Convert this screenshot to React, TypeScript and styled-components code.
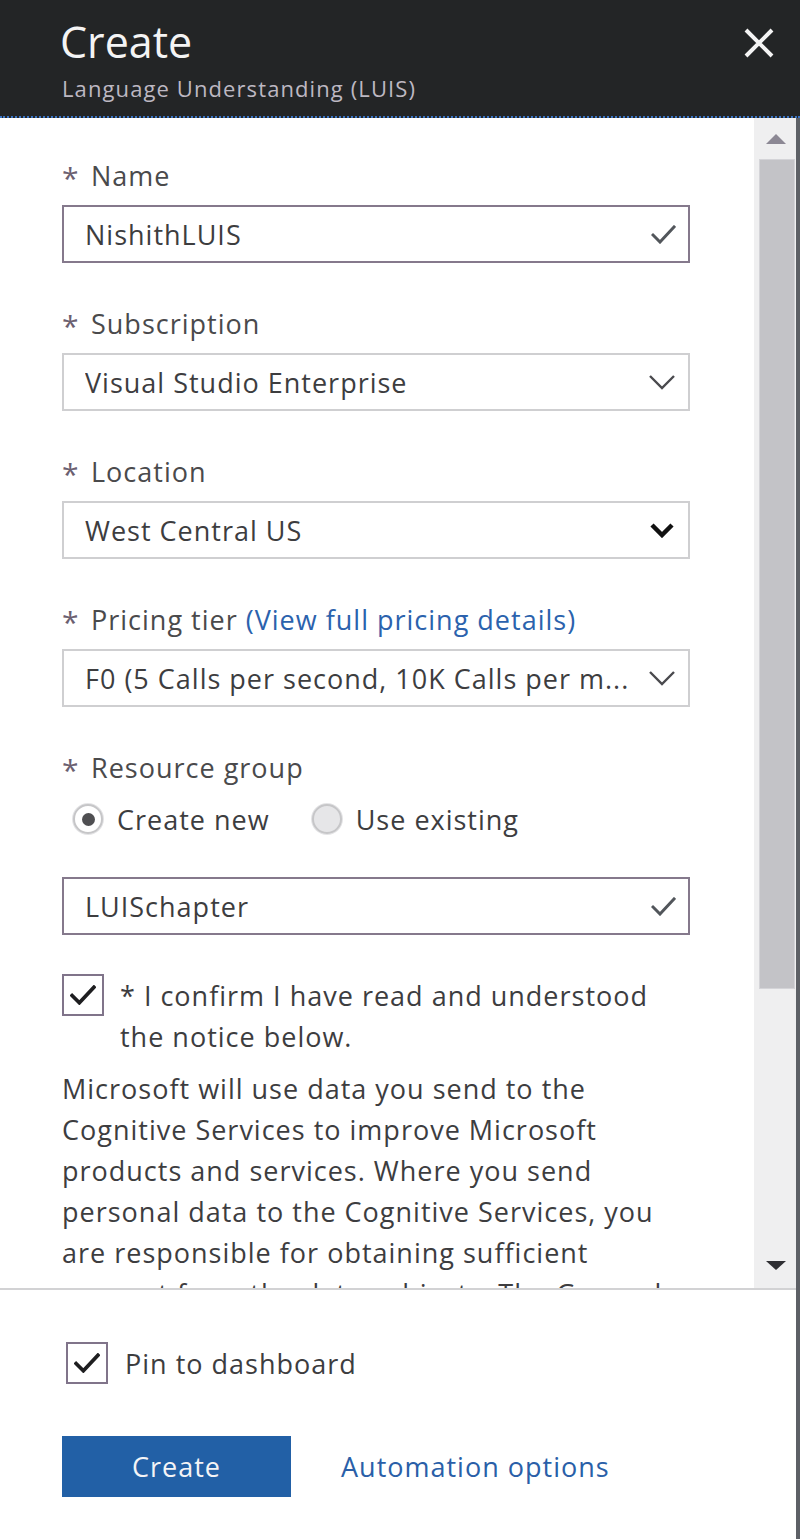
import React from "react";
import styled, { createGlobalStyle } from "styled-components";

const GlobalStyle = createGlobalStyle`
  html, body { margin: 0; padding: 0; background: #ffffff; }
  body { font-family: "Open Sans", "Noto Sans", "Liberation Sans", sans-serif; }
  * { box-sizing: border-box; }
`;

const Panel = styled.div`
  width: 800px;
  height: 1539px;
  display: flex;
  flex-direction: column;
  background: #ffffff;
  overflow: hidden;
`;

const Header = styled.header`
  height: 118px;
  flex: none;
  background: #232526;
  border-bottom: 2px dotted #3a74c4;
  display: flex;
  align-items: flex-start;
  justify-content: space-between;
  padding: 12px 24px 0 60px;
`;

const Titles = styled.div`
  display: flex;
  flex-direction: column;
`;

const Title = styled.h1`
  margin: 0;
  font-size: 43px;
  font-weight: 400;
  color: #f4f4f4;
  line-height: 60px;
`;

const Subtitle = styled.div`
  font-size: 22px;
  color: #bdb8c2;
  line-height: 28px;
  margin-top: 2px;
  padding-left: 2px;
  letter-spacing: 1.1px;
`;

const CloseButton = styled.button`
  background: none;
  border: none;
  padding: 0;
  margin-top: 14px;
  width: 34px;
  height: 34px;
  display: flex;
  align-items: center;
  justify-content: center;
  cursor: pointer;
`;

const Body = styled.div`
  flex: 1;
  display: flex;
  flex-direction: column;
  border-right: 4px solid #5d6066;
  min-height: 0;
  font-size: 27px;
  letter-spacing: 1px;
  color: #3d3d3f;
`;

const Main = styled.div`
  height: 1172px;
  flex: none;
  display: flex;
  flex-direction: row;
  border-bottom: 2px solid #d2d2d4;
`;

const Content = styled.div`
  flex: 1;
  overflow: hidden;
  padding: 40px 64px 0 62px;
  display: flex;
  flex-direction: column;
  & > * { flex-shrink: 0; }
`;

const Field = styled.div<{ $gap?: number }>`
  display: flex;
  flex-direction: column;
  gap: 11px;
  margin-bottom: ${(p) => p.$gap ?? 43}px;
`;

const Label = styled.div`
  height: 36px;
  line-height: 36px;
  color: #4a4a4c;
  display: flex;
  align-items: center;
  white-space: nowrap;
`;

const Star = styled.span`
  color: #6b6070;
  font-size: 30px;
  width: 29px;
  flex: none;
  margin-top: 4px;
`;

const Link = styled.span`
  color: #2b62ad;
`;

const Box = styled.div<{ $strong?: boolean }>`
  height: 58px;
  flex: none;
  border: ${(p) => (p.$strong ? "2px solid #85798c" : "2px solid #cfcfd1")};
  display: flex;
  align-items: center;
  justify-content: space-between;
  padding: 0 12px 0 21px;
  background: #fff;
`;

const BoxText = styled.span`
  white-space: nowrap;
  overflow: hidden;
`;

const RadioRow = styled.div`
  height: 36px;
  display: flex;
  align-items: center;
  padding-left: 11px;
  margin: 15px 0 40px;
`;

const RadioOption = styled.label`
  display: flex;
  align-items: center;
  gap: 14px;
  margin-right: 42px;
`;

const RadioCircle = styled.span<{ $checked?: boolean }>`
  width: 30px;
  height: 30px;
  border-radius: 50%;
  border: 2px solid #c6c6c8;
  background: ${(p) => (p.$checked ? "#ffffff" : "#e6e6e8")};
  box-shadow: 0 0 0 1px #e4e4e6;
  display: flex;
  align-items: center;
  justify-content: center;
  &::after {
    content: "";
    width: 13px;
    height: 13px;
    border-radius: 50%;
    background: ${(p) => (p.$checked ? "#4f4f52" : "transparent")};
  }
`;

const ConfirmRow = styled.div`
  display: flex;
  align-items: flex-start;
  gap: 16px;
  margin-top: 39px;
`;

const CheckBox = styled.span`
  width: 42px;
  height: 42px;
  flex: none;
  border: 2px solid #80748a;
  display: flex;
  align-items: center;
  justify-content: center;
  background: #fff;
`;

const ConfirmText = styled.div`
  line-height: 41px;
  margin-top: 1px;
  white-space: nowrap;
`;

const Notice = styled.p`
  margin: 11px 0 0;
  line-height: 41px;
  white-space: nowrap;
`;

const Scrollbar = styled.div`
  width: 42px;
  flex: none;
  background: #efeff0;
  display: flex;
  flex-direction: column;
  align-items: center;
  padding-top: 16px;
`;

const Arrow = styled.div<{ $down?: boolean }>`
  width: 0;
  height: 0;
  border-left: 10px solid transparent;
  border-right: 10px solid transparent;
  ${(p) =>
    p.$down
      ? "border-top: 9px solid #2f2f33;"
      : "border-bottom: 10px solid #8c8894;"}
  margin-left: 2px;
`;

const Thumb = styled.div`
  width: 36px;
  height: 830px;
  margin: 15px 0 0 4px;
  background: #c3c3c7;
  border: 1px solid #d4d4d8;
`;

const Spacer = styled.div`
  flex: 1;
`;

const DownWrap = styled.div`
  padding-bottom: 18px;
`;

const Footer = styled.footer`
  flex: 1;
  display: flex;
  flex-direction: column;
  padding: 52px 0 0 62px;
`;

const PinRow = styled.div`
  display: flex;
  align-items: center;
  gap: 17px;
  padding-left: 4px;
`;

const Actions = styled.div`
  display: flex;
  align-items: center;
  gap: 50px;
  margin-top: 52px;
`;

const PrimaryButton = styled.button`
  width: 229px;
  height: 61px;
  background: #2260a6;
  border: none;
  color: #f4f4f6;
  font-family: inherit;
  font-size: 27px;
  letter-spacing: 1px;
  cursor: pointer;
`;

const TextLink = styled.a`
  color: #2a5fa8;
  text-decoration: none;
`;

const Check = ({ w = 25, h = 19, color = "#52565b", sw = 3 }) => (
  <svg width={w} height={h} viewBox="0 0 25 19" fill="none">
    <path d="M2 10 L9 17 L23 2" stroke={color} strokeWidth={sw} strokeLinecap="square" strokeLinejoin="miter" />
  </svg>
);

const Chevron = ({ bold = false }) => (
  <svg width="28" height="16" viewBox="0 0 28 16" fill="none">
    <path
      d={bold ? "M4 3 L14 13 L24 3" : "M2 2 L14 14 L26 2"}
      stroke={bold ? "#111" : "#4a4a4e"}
      strokeWidth={bold ? 4.5 : 2.4}
    />
  </svg>
);

export default function App() {
  return (
    <>
      <GlobalStyle />
      <Panel>
        <Header>
          <Titles>
            <Title>Create</Title>
            <Subtitle>Language Understanding (LUIS)</Subtitle>
          </Titles>
          <CloseButton aria-label="Close">
            <svg width="32" height="32" viewBox="0 0 32 32">
              <path d="M3 3 L29 29 M29 3 L3 29" stroke="#f4f4f4" strokeWidth="4" />
            </svg>
          </CloseButton>
        </Header>
        <Body>
          <Main>
            <Content>
              <Field>
                <Label><Star>*</Star>Name</Label>
                <Box $strong>
                  <BoxText>NishithLUIS</BoxText>
                  <Check />
                </Box>
              </Field>
              <Field>
                <Label><Star>*</Star>Subscription</Label>
                <Box>
                  <BoxText>Visual Studio Enterprise</BoxText>
                  <Chevron />
                </Box>
              </Field>
              <Field>
                <Label><Star>*</Star>Location</Label>
                <Box>
                  <BoxText>West Central US</BoxText>
                  <Chevron bold />
                </Box>
              </Field>
              <Field>
                <Label>
                  <Star>*</Star>Pricing tier&nbsp;<Link>(View full pricing details)</Link>
                </Label>
                <Box>
                  <BoxText>F0 (5 Calls per second, 10K Calls per m...</BoxText>
                  <Chevron />
                </Box>
              </Field>
              <Field $gap={0}>
                <Label><Star>*</Star>Resource group</Label>
              </Field>
              <RadioRow>
                <RadioOption><RadioCircle $checked />Create new</RadioOption>
                <RadioOption><RadioCircle />Use existing</RadioOption>
              </RadioRow>
              <Box $strong>
                <BoxText>LUISchapter</BoxText>
                <Check />
              </Box>
              <ConfirmRow>
                <CheckBox><Check w={26} h={20} color="#1e1e20" sw={3.5} /></CheckBox>
                <ConfirmText>
                  * I confirm I have read and understood
                  <br />
                  the notice below.
                </ConfirmText>
              </ConfirmRow>
              <Notice>
                Microsoft will use data you send to the
                <br />
                Cognitive Services to improve Microsoft
                <br />
                products and services. Where you send
                <br />
                personal data to the Cognitive Services, you
                <br />
                are responsible for obtaining sufficient
                <br />
                consent from the data subjects. The General
              </Notice>
            </Content>
            <Scrollbar>
              <Arrow />
              <Thumb />
              <Spacer />
              <DownWrap>
                <Arrow $down />
              </DownWrap>
            </Scrollbar>
          </Main>
          <Footer>
            <PinRow>
              <CheckBox><Check w={26} h={20} color="#1e1e20" sw={3.5} /></CheckBox>
              Pin to dashboard
            </PinRow>
            <Actions>
              <PrimaryButton>Create</PrimaryButton>
              <TextLink href="#">Automation options</TextLink>
            </Actions>
          </Footer>
        </Body>
      </Panel>
    </>
  );
}
